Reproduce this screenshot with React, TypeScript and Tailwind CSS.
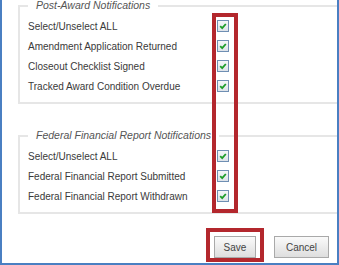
import React from 'react';

const CheckBox: React.FC = () => (
  <span className="block w-[12px] h-[12px] border border-[#6f8fb3] bg-gradient-to-b from-[#f4f6f8] to-[#dde3ea]">
    <svg viewBox="0 0 10 10" className="w-[10px] h-[10px]">
      <path d="M2.2 5.2 L4.2 7.2 L7.8 3" fill="none" stroke="#1e9e2a" strokeWidth="1.8" />
    </svg>
  </span>
);

const Row: React.FC<{ label: string }> = ({ label }) => (
  <div className="flex items-center h-[20px]">
    <span className="w-[189px] whitespace-nowrap text-[10px]">{label}</span>
    <CheckBox />
  </div>
);

const Group: React.FC<{ title: string; items: string[]; className?: string }> = ({ title, items, className }) => (
  <fieldset className={`ml-[16px] border-2 border-r-0 border-[#e6e6e6] pl-[8px] pt-[4px] pb-[6px] ${className ?? ''}`}>
    <legend className="ml-0 px-[8px] italic text-[10.5px] text-[#555] leading-[13px]">{title}</legend>
    {items.map(item => (
      <Row key={item} label={item} />
    ))}
  </fieldset>
);

const App: React.FC = () => {
  return (
    <div
      className="relative w-[339px] h-[265px] overflow-hidden bg-white border-l-2 border-r-2 border-b-2 border-[#4a7fc2] text-[11px] text-[#3a3a3a]"
      style={{ fontFamily: '"Liberation Sans", Arial, sans-serif' }}
    >
      <div className="mt-[-1px]">
        <Group
          title="Post-Award Notifications"
          items={['Select/Unselect ALL', 'Amendment Application Returned', 'Closeout Checklist Signed', 'Tracked Award Condition Overdue']}
        />
        <Group
          className="mt-[25px]"
          title="Federal Financial Report Notifications"
          items={['Select/Unselect ALL', 'Federal Financial Report Submitted', 'Federal Financial Report Withdrawn']}
        />
        <div className="flex justify-end gap-[18px] pr-[8px] mt-[22px]">
          <button className="w-[42px] h-[22px] border border-[#a9a9a9] bg-gradient-to-b from-[#fafafa] to-[#dedede] text-[10px] text-[#444]">Save</button>
          <button className="w-[55px] h-[22px] border border-[#a9a9a9] bg-gradient-to-b from-[#fafafa] to-[#dedede] text-[10px] text-[#444]">Cancel</button>
        </div>
      </div>

      {/* annotation boxes */}
      <div className="absolute left-[210px] top-[13px] w-[26px] h-[200px] border-4 border-[#b3272d]" />
      <div className="absolute left-[204px] top-[228px] w-[58px] h-[34px] border-4 border-[#b3272d]" />
    </div>
  );
};

export default App;
